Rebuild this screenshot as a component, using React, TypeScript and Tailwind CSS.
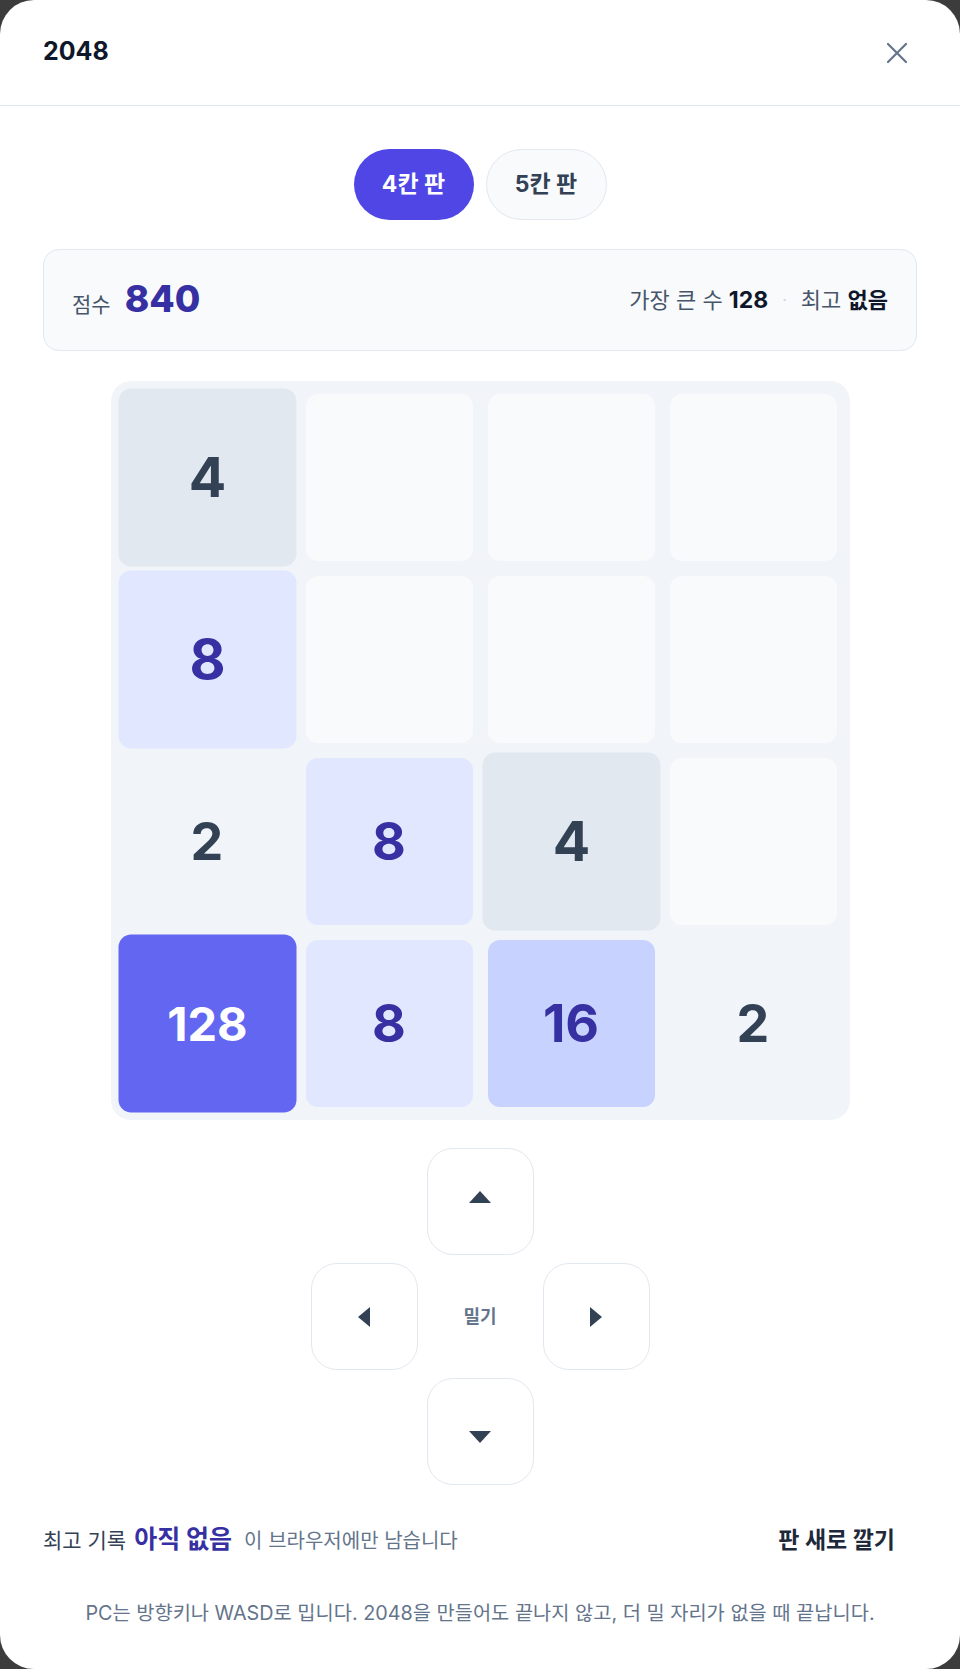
import React from 'react';

type Tile = { v: number; pop?: boolean } | null;

const board: Tile[][] = [
  [{ v: 4, pop: true }, null, null, null],
  [{ v: 8, pop: true }, null, null, null],
  [{ v: 2 }, { v: 8 }, { v: 4, pop: true }, null],
  [{ v: 128, pop: true }, { v: 8 }, { v: 16 }, { v: 2 }],
];

const tileStyle: Record<number, string> = {
  2: 'bg-[#f1f5f9] text-[#334155]',
  4: 'bg-[#e2e8f0] text-[#334155]',
  8: 'bg-[#e0e7ff] text-[#3730a3]',
  16: 'bg-[#c7d2fe] text-[#3730a3]',
  128: 'bg-[#6366f1] text-white',
};

function Cell({ tile }: { tile: Tile }) {
  if (!tile) return <div className="w-[167px] h-[167px] rounded-xl bg-[#f8fafc]" />;
  return (
    <div
      className={`w-[167px] h-[167px] rounded-xl flex items-center justify-center font-bold ${tileStyle[tile.v]} ${
        tile.pop ? 'scale-[1.066]' : ''
      } ${tile.v >= 100 ? 'text-[44px]' : 'text-[52px]'}`}
    >
      {tile.v}
    </div>
  );
}

type Dir = 'up' | 'down' | 'left' | 'right';

function Arrow({ dir }: { dir: Dir }) {
  const pts = {
    up: '11,0 22,12 0,12',
    down: '0,0 22,0 11,12',
    left: '12,0 12,20 0,10',
    right: '0,0 12,10 0,20',
  }[dir];
  const vertical = dir === 'up' || dir === 'down';
  return (
    <svg
      width={vertical ? 22 : 12}
      height={vertical ? 12 : 20}
      viewBox={vertical ? '0 0 22 12' : '0 0 12 20'}
      className={dir === 'up' ? '-translate-y-[5px]' : dir === 'down' ? 'translate-y-[5px]' : ''}
    >
      <polygon points={pts} fill="#334155" />
    </svg>
  );
}

function PadButton({ dir }: { dir: Dir }) {
  return (
    <button className="w-[107px] h-[107px] rounded-[26px] border border-[#e2e8f0] bg-white flex items-center justify-center">
      <Arrow dir={dir} />
    </button>
  );
}

export default function App() {
  return (
    <div className="min-h-[1669px] bg-[#3c3c3c]" style={{ fontFamily: 'Inter, "Noto Sans CJK KR", sans-serif' }}>
      <div className="h-[1669px] bg-white rounded-[34px] flex flex-col">
        {/* 헤더 */}
        <div className="h-[106px] shrink-0 border-b border-[#e2e8f0] pl-[43px] pr-[52px] flex items-center justify-between">
          <h1 className="text-[25px] font-bold text-[#0f172a] -mt-[2px]">2048</h1>
          <button className="text-[#64748b]" title="닫기">
            <svg width="22" height="22" viewBox="0 0 22 22" fill="none" stroke="currentColor" strokeWidth="2.2" strokeLinecap="round">
              <path d="M2 2l18 18M20 2L2 20" />
            </svg>
          </button>
        </div>

        {/* 판 크기 */}
        <div className="mt-[43px] flex justify-center gap-3">
          <button className="h-[71px] w-[120px] rounded-full bg-[#4f46e5] text-white text-[23px] font-bold">4칸 판</button>
          <button className="h-[71px] w-[121px] rounded-full bg-[#f8fafc] border border-[#e2e8f0] text-[#334155] text-[23px] font-bold">
            5칸 판
          </button>
        </div>

        {/* 점수 */}
        <div className="mx-[43px] mt-[29px] h-[102px] rounded-2xl border border-[#e2e8f0] bg-[#f8fafc] px-7 flex items-center justify-between">
          <div className="flex items-baseline gap-[14px]">
            <span className="text-[21px] text-[#475569]">점수</span>
            <span className="text-[37px] font-extrabold text-[#3730a3] leading-none">840</span>
          </div>
          <div className="flex items-center gap-[14px] text-[22px] text-[#475569]">
            <span>
              가장 큰 수 <b className="text-[#0f172a] font-bold text-[23px]">128</b>
            </span>
            <span className="text-[#cbd5e1] text-[16px]">·</span>
            <span>
              최고 <b className="text-[#0f172a] font-bold">없음</b>
            </span>
          </div>
        </div>

        {/* 보드 */}
        <div className="mt-[30px] self-center w-[739px] h-[739px] rounded-[20px] bg-[#f1f5f9] p-[13px] grid grid-cols-4 gap-[15px]">
          {board.flat().map((t, i) => (
            <Cell key={i} tile={t} />
          ))}
        </div>

        {/* 방향 버튼 */}
        <div className="mt-[28px] self-center grid grid-cols-[107px_107px_107px] gap-x-[9px] gap-y-[8px]">
          <div />
          <PadButton dir="up" />
          <div />
          <PadButton dir="left" />
          <div className="flex items-center justify-center text-[18px] font-semibold text-[#64748b]">밀기</div>
          <PadButton dir="right" />
          <div />
          <PadButton dir="down" />
          <div />
        </div>

        {/* 기록 */}
        <div className="mt-[36px] pl-[43px] pr-[65px] flex items-center justify-between">
          <div className="flex items-baseline">
            <span className="text-[21px] text-[#334155]">최고 기록</span>
            <span className="ml-2 text-[25px] font-bold text-[#3730a3]">아직 없음</span>
            <span className="ml-3 text-[20px] text-[#64748b]">이 브라우저에만 남습니다</span>
          </div>
          <button className="text-[23px] font-bold text-[#1e293b]">판 새로 깔기</button>
        </div>

        <p className="mt-[40px] text-center text-[19.8px] text-[#64748b]">
          PC는 방향키나 WASD로 밉니다. 2048을 만들어도 끝나지 않고, 더 밀 자리가 없을 때 끝납니다.
        </p>
      </div>
    </div>
  );
}
